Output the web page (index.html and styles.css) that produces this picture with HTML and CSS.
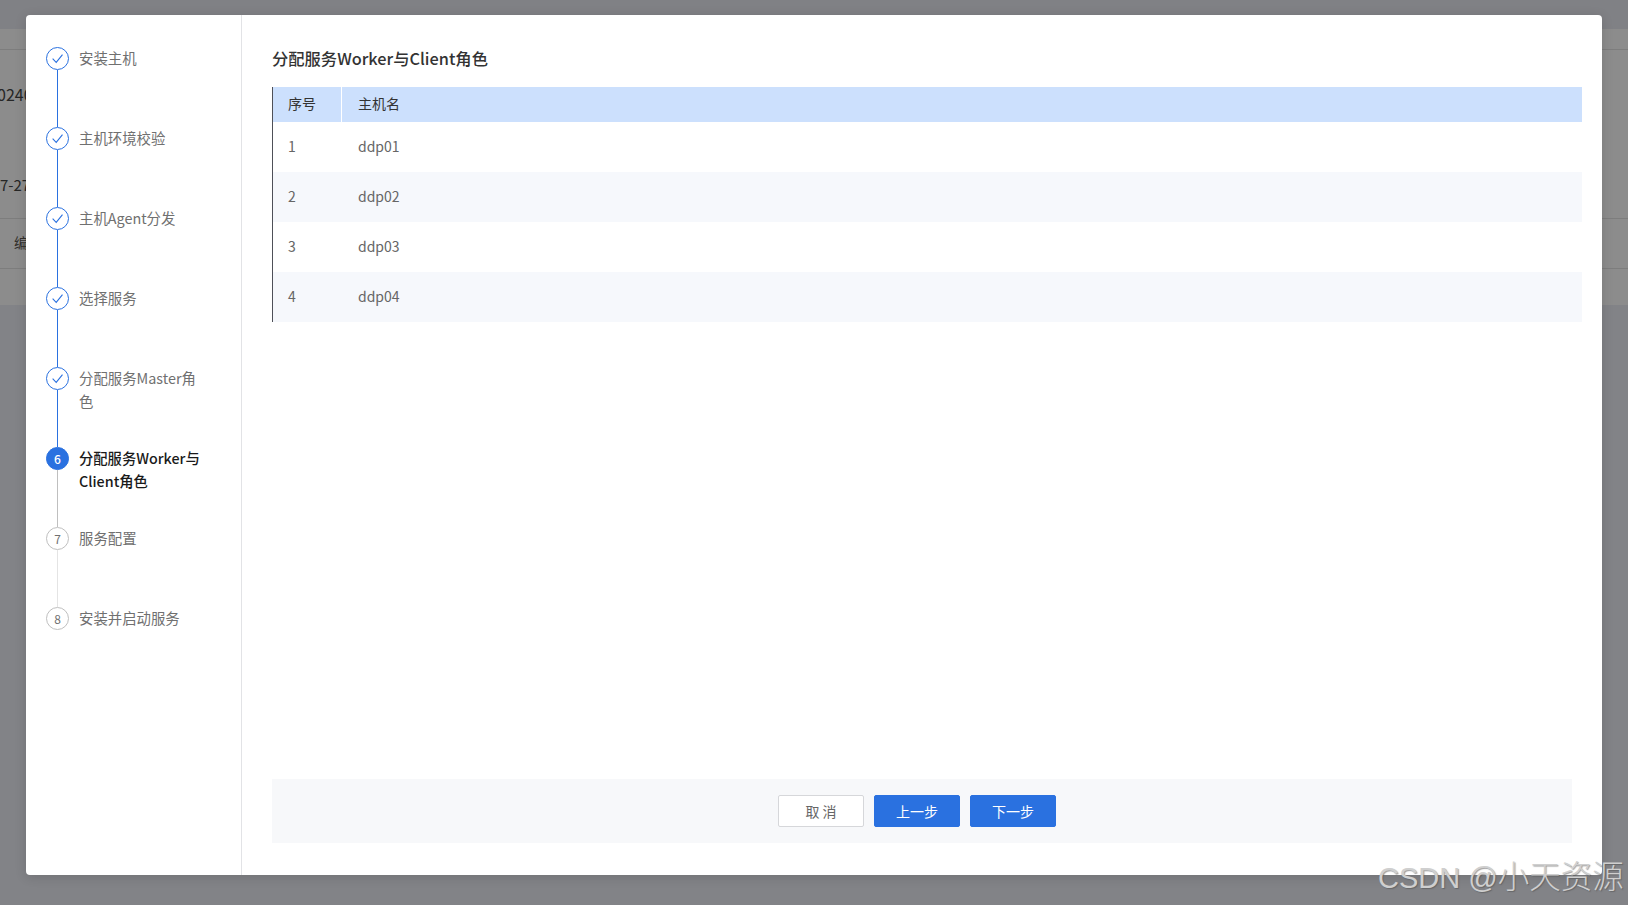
FILE: index.html
```html
<!DOCTYPE html>
<html lang="zh">
<head>
<meta charset="utf-8">
<title>分配服务Worker与Client角色</title>
<link rel="stylesheet" href="styles.css">
</head>
<body>
<div class="page">
  <div class="page-band"></div>
  <div class="page-card">
    <div class="pc-row pc-head"></div>
    <div class="pc-row pc-a"><span>0240</span></div>
    <div class="pc-row pc-b"><span>7-27</span></div>
    <div class="pc-row pc-c"><span>编辑</span></div>
    <div class="pc-row pc-d"></div>
  </div>
</div>
<div class="modal">
  <aside class="steps">
    <div class="step done">
      <span class="dot"><svg viewBox="0 0 12 12" class="check"><path d="M1.5 6.2 L4.8 9.6 L10.6 2.4"/></svg></span>
      <span class="label">安装主机</span>
    </div>
    <div class="step done">
      <span class="dot"><svg viewBox="0 0 12 12" class="check"><path d="M1.5 6.2 L4.8 9.6 L10.6 2.4"/></svg></span>
      <span class="label">主机环境校验</span>
    </div>
    <div class="step done">
      <span class="dot"><svg viewBox="0 0 12 12" class="check"><path d="M1.5 6.2 L4.8 9.6 L10.6 2.4"/></svg></span>
      <span class="label">主机Agent分发</span>
    </div>
    <div class="step done">
      <span class="dot"><svg viewBox="0 0 12 12" class="check"><path d="M1.5 6.2 L4.8 9.6 L10.6 2.4"/></svg></span>
      <span class="label">选择服务</span>
    </div>
    <div class="step done">
      <span class="dot"><svg viewBox="0 0 12 12" class="check"><path d="M1.5 6.2 L4.8 9.6 L10.6 2.4"/></svg></span>
      <span class="label">分配服务Master角色</span>
    </div>
    <div class="step active">
      <span class="dot">6</span>
      <span class="label">分配服务Worker与Client角色</span>
    </div>
    <div class="step todo next-todo">
      <span class="dot">7</span>
      <span class="label">服务配置</span>
    </div>
    <div class="step todo last">
      <span class="dot">8</span>
      <span class="label">安装并启动服务</span>
    </div>
  </aside>
  <main class="content">
    <h2 class="title">分配服务Worker与Client角色</h2>
    <div class="table">
      <div class="row head"><div class="c1">序号</div><div class="c2">主机名</div></div>
      <div class="row"><div class="c1">1</div><div class="c2">ddp01</div></div>
      <div class="row alt"><div class="c1">2</div><div class="c2">ddp02</div></div>
      <div class="row"><div class="c1">3</div><div class="c2">ddp03</div></div>
      <div class="row alt"><div class="c1">4</div><div class="c2">ddp04</div></div>
    </div>
    <div class="footer">
      <button class="btn ghost">取 消</button>
      <button class="btn primary">上一步</button>
      <button class="btn primary">下一步</button>
    </div>
  </main>
</div>
<div class="watermark">CSDN @<span class="wm-cjk">小天资源</span></div>
</body>
</html>
```

FILE: styles.css
```css
* { box-sizing: border-box; }
html, body { margin: 0; height: 100%; }
body {
  width: 1628px;
  height: 905px;
  overflow: hidden;
  background: #828387;
  font-family: "Noto Sans CJK SC", "Noto Sans", sans-serif;
  font-size: 14px;
  color: #666;
}
.page { display: flex; flex-direction: column; height: 100%; }
.page-band { height: 29px; background: #808185; flex: none; }
.page-card { height: 276px; background: #8c8c8c; flex: none; color: #262626; font-size: 15px; }
.pc-row { overflow: hidden; white-space: nowrap; border-bottom: 1px solid #7d7d7d; display: flex; align-items: center; }
.pc-head { height: 21px; }
.pc-a { height: 89px; border: 0; font-size: 16px; padding-bottom: 2px; margin-left: -3px; }
.pc-b { height: 80px; padding-top: 12px; }
.pc-c { height: 50px; padding-left: 14px; padding-bottom: 4px; font-size: 14px; color: #33302c; }
.pc-d { height: 36px; border: 0; }

.modal {
  position: absolute;
  left: 26px;
  top: 15px;
  width: 1576px;
  height: 860px;
  background: #fff;
  border-radius: 4px;
  display: flex;
  box-shadow: 0 2px 12px rgba(0, 0, 0, .14);
}
.steps {
  width: 216px;
  flex: none;
  border-right: 1px solid #e2e3e6;
  padding: 32px 0 0 20px;
}
.step {
  position: relative;
  height: 80px;
  display: flex;
  gap: 10px;
  line-height: 23px;
}
.step::after {
  content: "";
  position: absolute;
  left: 11px;
  top: 23px;
  bottom: 0;
  width: 1px;
  background: #2a71e0;
}
.step.active::after { background: #bfbfbf; }
.step.next-todo::after { background: #e4e4e4; }
.step.last::after { display: none; }
.dot {
  flex: none;
  width: 23px;
  height: 23px;
  border: 1px solid #2a71e0;
  border-radius: 50%;
  display: flex;
  align-items: center;
  justify-content: center;
  font-size: 12px;
  line-height: 1;
}
.check { width: 13px; height: 13px; fill: none; stroke: #2a71e0; stroke-width: 1; }
.label { width: 125px; color: #707070; font-size: 14.4px; margin-top: -1.5px; }
.active .dot { background: #2a71e0; color: #fff; font-weight: 500; }
.active .label { color: #1a1a1a; font-weight: 500; font-size: 14.3px; }
.todo .dot { border-color: #bfbfbf; color: #707070; font-weight: 400; }

.content {
  flex: 1;
  padding: 0 20px 32px 30px;
  display: flex;
  flex-direction: column;
}
.title {
  margin: 31px 0 16px;
  height: 25px;
  line-height: 25px;
  font-size: 16.3px;
  font-weight: 500;
  color: #333;
}
.table { border-left: 1px solid #4e5058; }
.row { display: flex; height: 50px; align-items: center; color: #666; padding-bottom: 2px; }
.row.head { height: 35px; background: #cce0fd; color: #333; align-items: stretch; padding-bottom: 0; }
.row.alt { background: #f6f8fc; }
.c1 { width: 69px; padding-left: 15px; display: flex; align-items: center; }
.c2 { padding-left: 16px; display: flex; align-items: center; }
.head .c1 { border-right: 1px solid #fff; padding-bottom: 3px; }
.head .c2 { padding-bottom: 3px; }
.footer {
  margin-top: auto;
  margin-right: 10px;
  padding-right: 10px;
  height: 64px;
  background: #f7f8fa;
  display: flex;
  align-items: center;
  justify-content: center;
  gap: 10px;
}
.btn {
  width: 86px;
  height: 32px;
  border-radius: 2px;
  font-family: inherit;
  font-size: 14px;
  padding: 0;
  line-height: 1;
}
.ghost { background: #fff; border: 1px solid #d6d7da; color: #666; }
.primary { background: #2a71e0; border: 1px solid #2a71e0; color: #fff; }

.watermark {
  position: absolute;
  left: 1378px;
  top: 852px;
  font-family: "Liberation Sans", sans-serif;
  font-size: 29px;
  line-height: 44px;
  white-space: nowrap;
  color: #cfcfcf;
  text-shadow: 1px 1px 1px rgba(80, 80, 80, .55);
}
.wm-cjk {
  font-family: "Noto Sans CJK SC", sans-serif;
  font-size: 31.5px;
  font-weight: 300;
}
```
